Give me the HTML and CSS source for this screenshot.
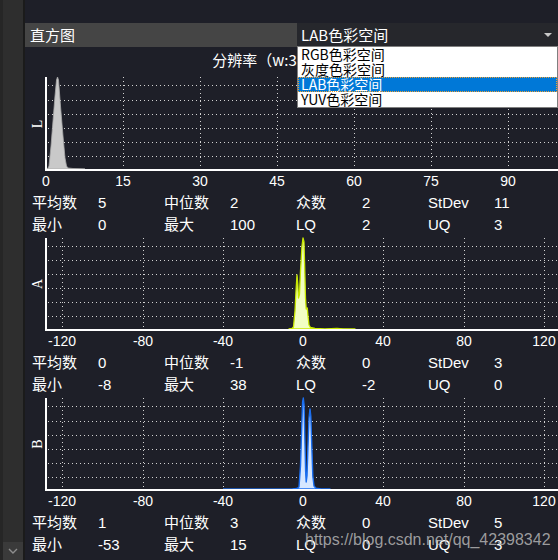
FILE: index.html
```html
<!DOCTYPE html>
<html lang="zh">
<head>
<meta charset="utf-8">
<title>直方图</title>
<link rel="stylesheet" href="styles.css">
</head>
<body>
<div class="app">
  <div class="vscroll">
    <div class="vscroll-track"></div>
    <div class="vscroll-btn">
      <svg class="chev" width="10" height="6" viewBox="0 0 10 6"><polyline points="1,1 5,5 9,1"/></svg>
    </div>
  </div>
  <div class="main">
    <div class="topgap"></div>
    <div class="titlebar">
      <div class="title">直方图</div>
      <div class="combo"><span class="combo-text">LAB色彩空间</span><i class="arrow"></i></div>
    </div>
    <div class="res">分辨率（w:320,h:240）</div>

    <section class="hist">
      <svg class="plot" width="533" height="116" viewBox="0 0 533 116">
        <g class="grid">
          <path d="M23 9.5H533M23 24.5H533M23 38.5H533M23 52.5H533M23 66.5H533M23 80.5H533"/>
          <path d="M98.5 1V93M175.5 1V93M252.5 1V93M329.5 1V93M406.5 1V93M483.5 1V93"/>
        </g>
        <path class="bar-l" d="M22 93L23 92L24 90L26 70L28 45L30 20L31.5 4L32.5 1L33.5 4L35.5 30L38 60L40 82L41.5 90L43 92L48 92.5L60 93Z"/>
        <path class="axis" d="M21 1V95M20 94H533"/>
        <text class="ylab" transform="translate(12 48) rotate(-90)">L</text>
        <g class="tick">
          <text x="21" y="110">0</text>
          <text x="98" y="110">15</text>
          <text x="175" y="110">30</text>
          <text x="252" y="110">45</text>
          <text x="329" y="110">60</text>
          <text x="406" y="110">75</text>
          <text x="483" y="110">90</text>
        </g>
      </svg>
      <div class="stats">
        <span>平均数</span><span>5</span><span>中位数</span><span>2</span><span>众数</span><span>2</span><span>StDev</span><span>11</span>
        <span>最小</span><span>0</span><span>最大</span><span>100</span><span>LQ</span><span>2</span><span>UQ</span><span>3</span>
      </div>
    </section>

    <section class="hist">
      <svg class="plot" width="533" height="116" viewBox="0 0 533 116">
        <g class="grid">
          <path d="M23 10.5H533M23 24.5H533M23 38.5H533M23 52.5H533M23 66.5H533M23 80.5H533"/>
          <path d="M37.5 2V93M118.5 2V93M198.5 2V93M358.5 2V93M439.5 2V93M519.5 2V93"/>
        </g>
        <path class="bar-a" d="M264 93L267 92.5L268.5 91L270 75L271 55L272 39L272.8 48L273.5 62L274.5 58L275.5 35L277 10L278 2L279 6L279.8 35L280.5 62L281.2 73L282.3 72L283 80L284 89L285.5 91.5L290 92.5L300 93L306 92.6L312 92.3L318 92.8L330 93Z"/>
        <path class="axis" d="M21 2V95M20 94H533"/>
        <text class="ylab" transform="translate(12 48) rotate(-90)">A</text>
        <g class="tick">
          <text x="37" y="110">-120</text>
          <text x="118" y="110">-80</text>
          <text x="198" y="110">-40</text>
          <text x="278" y="110">0</text>
          <text x="358" y="110">40</text>
          <text x="439" y="110">80</text>
          <text x="519" y="110">120</text>
        </g>
      </svg>
      <div class="stats">
        <span>平均数</span><span>0</span><span>中位数</span><span>-1</span><span>众数</span><span>0</span><span>StDev</span><span>3</span>
        <span>最小</span><span>-8</span><span>最大</span><span>38</span><span>LQ</span><span>-2</span><span>UQ</span><span>0</span>
      </div>
    </section>

    <section class="hist">
      <svg class="plot" width="533" height="116" viewBox="0 0 533 116">
        <g class="grid">
          <path d="M23 10.5H533M23 25.5H533M23 39.5H533M23 53.5H533M23 67.5H533M23 81.5H533"/>
          <path d="M37.5 2V93M118.5 2V93M198.5 2V93M358.5 2V93M439.5 2V93M519.5 2V93"/>
        </g>
        <path class="base-b" d="M198 92.7H290"/>
        <path class="bar-b" d="M268 93L272 92.5L274 91L275.5 70L276.8 30L277.6 6L278.3 2L279 8L279.8 40L280.6 75L281.2 86L282 80L283 50L284 22L285 13L285.8 20L286.8 50L287.8 80L289 90L291 92.3L296 93L305 93Z"/>
        <path class="axis" d="M21 2V95M20 94H533"/>
        <text class="ylab" transform="translate(12 48) rotate(-90)">B</text>
        <g class="tick">
          <text x="37" y="110">-120</text>
          <text x="118" y="110">-80</text>
          <text x="198" y="110">-40</text>
          <text x="278" y="110">0</text>
          <text x="358" y="110">40</text>
          <text x="439" y="110">80</text>
          <text x="519" y="110">120</text>
        </g>
      </svg>
      <div class="stats">
        <span>平均数</span><span>1</span><span>中位数</span><span>3</span><span>众数</span><span>0</span><span>StDev</span><span>5</span>
        <span>最小</span><span>-53</span><span>最大</span><span>15</span><span>LQ</span><span>0</span><span>UQ</span><span>3</span>
      </div>
    </section>

    <ul class="dropdown">
      <li>RGB色彩空间</li>
      <li>灰度色彩空间</li>
      <li class="sel">LAB色彩空间</li>
      <li>YUV色彩空间</li>
    </ul>
    <div class="watermark">https://blog.csdn.net/qq_42398342</div>
  </div>
</div>
</body>
</html>
```
FILE: styles.css
```css
* { box-sizing: border-box; }
html, body { margin: 0; padding: 0; }
body {
  width: 558px;
  height: 560px;
  overflow: hidden;
  background: #1e1f28;
  color: #fff;
  font-family: "Liberation Sans", "Noto Sans CJK SC", sans-serif;
  font-size: 15px;
}
.app { display: flex; height: 560px; }

.vscroll {
  width: 25px;
  flex: none;
  display: flex;
  flex-direction: column;
  background: #2e2e2e;
  border-left: 3px solid #262626;
  border-right: 2px solid #1b1b1b;
}
.vscroll-track { flex: 1; }
.vscroll-btn {
  height: 18px;
  background: #3a3a3a;
  display: flex;
  align-items: center;
  justify-content: center;
}
.chev polyline { fill: none; stroke: #8e8e8e; stroke-width: 1.4; }

.main {
  flex: 1;
  min-width: 0;
  position: relative;
  display: flex;
  flex-direction: column;
}
.topgap { height: 23px; flex: none; }
.titlebar { height: 24px; flex: none; display: flex; background: #454545; }
.title {
  flex: 1;
  padding-left: 5px;
  line-height: 24px;
  font-family: "Noto Sans CJK SC", sans-serif;
}
.combo {
  width: 261px;
  margin-bottom: 1px;
  background: #26272c;
  display: flex;
  align-items: center;
  padding: 0 6px 0 4px;
  font-family: "Noto Sans CJK SC", sans-serif;
}
.combo-text { flex: 1; }
.arrow {
  width: 0;
  height: 0;
  border-left: 4px solid transparent;
  border-right: 4px solid transparent;
  border-top: 4px solid #c8c8c8;
}
.res {
  height: 29px;
  flex: none;
  padding-top: 2px;
  line-height: 22px;
  text-align: center;
  font-family: "Noto Sans CJK SC", sans-serif;
}

.hist { flex: none; }
.plot { display: block; width: 533px; height: 116px; }
.grid path { fill: none; stroke: #d2d2d2; stroke-width: 1; stroke-dasharray: 1 3; }
.axis { fill: none; stroke: #ffffff; stroke-width: 2; }
.bar-l { fill: #c9c9c9; stroke: #a8a8a8; stroke-width: 0.8; }
.bar-a { fill: #f2ffc4; stroke: #c8e800; stroke-width: 1.3; stroke-linejoin: round; }
.bar-b { fill: #d6e7ff; stroke: #1a6ef0; stroke-width: 1.4; stroke-linejoin: round; }
.base-b { fill: none; stroke: #2160c4; stroke-width: 1; }
.ylab {
  fill: #fff;
  font-family: "Liberation Serif", serif;
  font-size: 14px;
  text-anchor: middle;
  dominant-baseline: central;
}
.tick text {
  fill: #fff;
  font-family: "Liberation Sans", sans-serif;
  font-size: 14px;
  text-anchor: middle;
}

.stats {
  display: grid;
  grid-template-columns: repeat(8, 66px);
  grid-auto-rows: 22px;
  padding-left: 7px;
  line-height: 22px;
  white-space: nowrap;
}

.dropdown {
  position: absolute;
  left: 272px;
  top: 46px;
  width: 261px;
  margin: 0;
  padding: 0;
  list-style: none;
  background: #fff;
  border: 1px solid #7f7f7f;
  color: #000;
  font-family: "Noto Sans CJK SC", sans-serif;
  font-size: 14px;
}
.dropdown li { height: 15px; line-height: 15px; padding-left: 3px; white-space: nowrap; }
.dropdown li.sel {
  background: #0078d7;
  color: #fff;
  outline: 1px dotted #f0a030;
  outline-offset: -1px;
}

.watermark {
  position: absolute;
  left: 280px;
  top: 531px;
  font-family: "Liberation Sans", sans-serif;
  font-size: 16px;
  line-height: 18px;
  color: rgba(180, 180, 180, 0.85);
  white-space: nowrap;
  pointer-events: none;
}
```
